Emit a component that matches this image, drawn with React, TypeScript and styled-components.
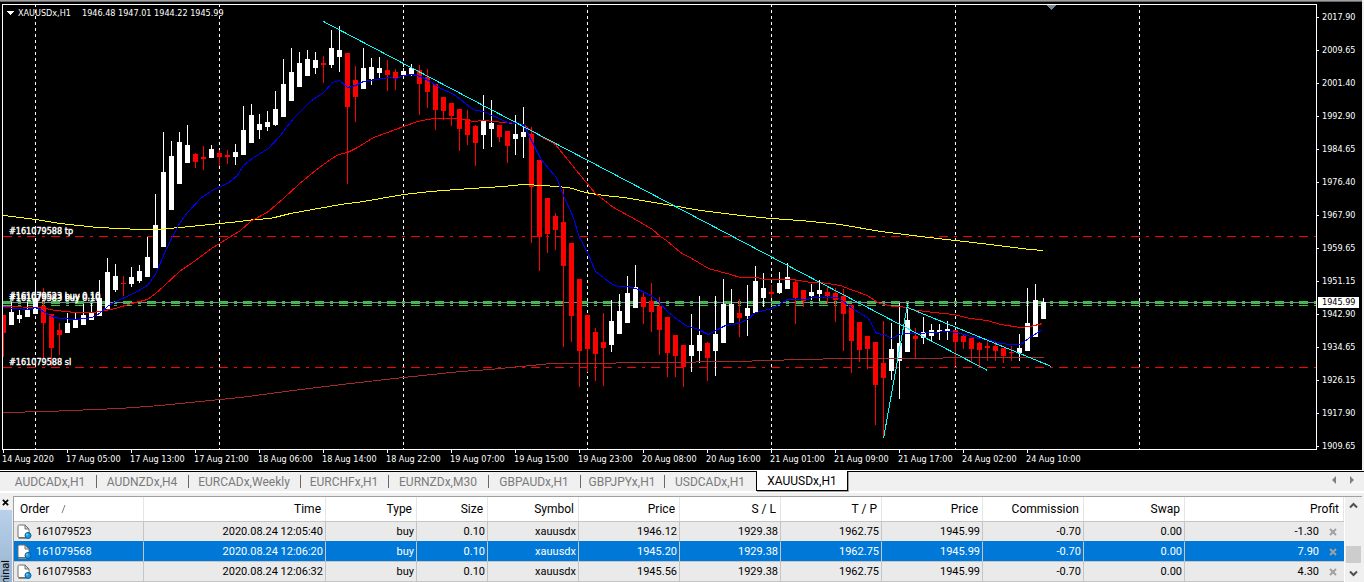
import React, { useState } from "react";
import styled, { createGlobalStyle, css } from "styled-components";

const GlobalStyle = createGlobalStyle`
  * { box-sizing: border-box; }
  html, body { margin: 0; padding: 0; }
  body {
    background: #f0f0f0;
    color: #000;
    font-family: Roboto, "Open Sans", sans-serif;
    font-size: 12px;
  }
  button { font: inherit; color: inherit; background: none; border: 0; padding: 0; margin: 0; }
`;

const CHART_FONT = `"DejaVu Sans Condensed", "DejaVu Sans", sans-serif`;

/* ---------- data ---------- */

type Candle = [up: 0 | 1, high: number, top: number, bottom: number, low: number];

const FIRST_BAR = 3;
const BAR_STEP = 8;

const candles: Candle[] = [
  [0, 315, 315, 333, 357], [1, 302, 312, 325, 325], [1, 310, 315, 319, 323], [1, 302, 310, 317, 317],
  [1, 280, 298, 314, 314], [0, 288, 306, 323, 358], [0, 314, 314, 348, 366], [0, 323, 330, 335, 355],
  [1, 313, 323, 333, 333], [1, 313, 320, 328, 328], [1, 304, 315, 325, 325], [1, 303, 313, 320, 320],
  [1, 280, 298, 316, 316], [1, 258, 272, 309, 309], [1, 264, 276, 290, 292], [0, 276, 283, 284, 296],
  [1, 267, 277, 284, 287], [1, 265, 271, 281, 283], [1, 237, 257, 277, 277], [1, 194, 225, 268, 268],
  [1, 132, 172, 247, 247], [1, 141, 156, 210, 210], [1, 132, 142, 184, 184], [1, 125, 145, 163, 163],
  [0, 153, 154, 162, 168], [0, 146, 157, 159, 170], [1, 145, 149, 158, 158], [0, 150, 153, 157, 166],
  [0, 150, 155, 157, 164], [1, 144, 152, 157, 165], [1, 106, 130, 155, 155], [1, 104, 115, 143, 143],
  [1, 114, 124, 130, 139], [1, 111, 122, 127, 131], [1, 91, 109, 125, 126], [1, 59, 84, 117, 117],
  [1, 48, 72, 101, 101], [1, 52, 63, 87, 87], [1, 50, 59, 76, 76], [1, 52, 60, 68, 74],
  [0, 56, 63, 65, 83], [1, 30, 48, 65, 68], [1, 26, 50, 57, 72], [0, 53, 53, 107, 184],
  [0, 66, 80, 97, 122], [1, 48, 68, 89, 89], [1, 58, 67, 79, 85], [1, 57, 68, 73, 78],
  [0, 60, 70, 75, 91], [0, 69, 72, 78, 90], [1, 68, 71, 75, 75], [1, 64, 68, 74, 76],
  [0, 65, 70, 84, 115], [0, 69, 77, 92, 108], [0, 84, 84, 110, 130], [0, 97, 97, 111, 120],
  [0, 103, 103, 116, 126], [0, 109, 109, 129, 151], [0, 110, 119, 135, 145], [0, 125, 126, 143, 166],
  [1, 95, 120, 135, 149], [1, 100, 123, 129, 147], [0, 125, 125, 137, 142], [0, 131, 131, 146, 163],
  [1, 115, 134, 139, 155], [1, 107, 132, 137, 158], [0, 127, 134, 187, 243], [0, 160, 160, 237, 271],
  [0, 198, 198, 234, 253], [0, 213, 216, 230, 250], [0, 189, 222, 266, 347], [0, 243, 243, 316, 342],
  [0, 279, 279, 351, 387], [0, 315, 315, 349, 372], [0, 328, 332, 354, 381], [0, 313, 342, 348, 386],
  [1, 300, 321, 345, 352], [1, 294, 311, 334, 334], [1, 276, 293, 323, 323], [1, 265, 287, 308, 308],
  [0, 293, 297, 307, 324], [0, 283, 301, 312, 332], [0, 297, 306, 330, 355], [0, 317, 317, 353, 377],
  [0, 335, 335, 356, 377], [0, 345, 345, 367, 387], [1, 314, 345, 356, 372], [1, 296, 335, 351, 363],
  [0, 342, 343, 358, 381], [1, 296, 334, 351, 376], [1, 279, 304, 343, 343], [1, 289, 304, 323, 323],
  [0, 299, 313, 318, 337], [1, 285, 308, 316, 336], [1, 266, 281, 313, 313], [1, 273, 288, 298, 307],
  [0, 285, 292, 294, 298], [1, 272, 283, 293, 294], [1, 263, 277, 289, 289], [0, 279, 282, 298, 324],
  [0, 290, 290, 301, 307], [1, 284, 292, 296, 300], [1, 280, 290, 294, 301], [0, 287, 292, 296, 304],
  [0, 288, 293, 300, 322], [0, 289, 296, 314, 351], [0, 305, 305, 341, 373], [0, 322, 322, 350, 362],
  [0, 336, 336, 349, 369], [0, 342, 342, 385, 425], [0, 321, 363, 378, 437], [1, 323, 349, 371, 380],
  [1, 303, 343, 361, 399], [1, 303, 320, 352, 352], [0, 328, 336, 339, 358], [1, 317, 332, 338, 344],
  [1, 324, 330, 336, 341], [1, 324, 330, 332, 340], [1, 321, 329, 331, 340], [0, 330, 330, 342, 366],
  [0, 334, 336, 342, 349], [0, 338, 338, 349, 362], [0, 342, 343, 350, 366], [0, 340, 346, 348, 361],
  [0, 342, 346, 351, 361], [0, 348, 348, 356, 363], [0, 346, 352, 353, 361], [1, 334, 348, 353, 361],
  [1, 288, 323, 351, 351], [1, 284, 300, 337, 337], [1, 298, 302, 319, 319],
];

const averages = [
  {
    color: "#a52a2a",
    points:
      "3,412 47,411 95,409 119,408 160,405 200,401 240,397 300,389 350,383 403,377 460,371 490,369 520,366 551,363 615,363 616,362 695,362 696,361 751,361 752,360 783,360 784,359 822,359 823,358 942,358 943,357 1043,357",
  },
  {
    color: "#ffff00",
    points:
      "3,215 35,219 60,223 97,227 119,228 140,229 158,229 179,227 200,225 220,223 230,222 255,219 270,218 290,213 340,204 363,201 403,194 430,191 470,188 487,187 503,186 523,184 543,185 568,187 585,192 603,195 623,197 647,201 660,203 700,210 740,215 771,218 800,220 840,224 880,231 920,236 955,240 990,244 1029,249 1043,250",
  },
  {
    color: "#ff0000",
    points:
      "3,306 40,307 55,310 75,312 92,312 99,311 115,308 131,303 147,299 155,293 163,286 179,271 195,260 211,248 227,238 240,230 250,221 268,211 283,198 298,184 315,170 330,159 338,154 347,152 357,147 373,137 387,132 403,126 417,121 433,118 457,118 473,121 483,120 503,122 523,124 532,131 542,137 555,144 563,154 580,175 595,193 613,207 635,219 652,229 660,236 666,240 680,252 693,259 708,268 730,274 740,277 757,277 763,279 793,279 810,282 820,282 840,285 850,289 867,295 877,302 892,306 900,306 917,310 933,312 953,314 970,318 987,320 1000,324 1020,327 1030,326 1042,323",
  },
  {
    color: "#0000ff",
    points:
      "3,307 15,308 27,309 35,307 43,311 51,316 59,318 75,319 92,317 99,313 107,306 115,301 131,294 147,285 155,274 163,255 171,238 179,223 187,212 200,198 213,189 227,183 237,175 243,165 253,157 268,148 280,135 293,118 310,101 323,92 332,82 339,80 347,87 355,85 363,81 377,79 388,77 396,78 403,75 412,74 420,76 430,81 440,88 452,93 460,99 470,107 475,110 483,111 492,115 507,122 523,124 532,142 540,158 548,168 556,177 563,195 572,215 579,237 587,252 595,271 612,284 618,286 628,286 638,289 652,296 660,303 668,312 677,319 685,325 692,327 698,329 708,334 717,329 725,325 738,323 747,319 755,312 772,308 780,303 787,299 807,299 812,297 837,297 843,301 852,308 868,318 876,333 883,334 892,338 900,333 917,333 933,332 947,331 957,332 973,337 987,339 1000,343 1010,344 1020,344 1028,338 1042,329",
  },
];

const trendLines = ["323,21 987,370", "883,438 907,304", "907,307 1051,366"];
const daySeparators = [35, 219, 403, 587, 771, 955, 1139];
const orderLevels = [
  { y: 236, color: "#ff0000" },
  { y: 301, color: "#32cd32" },
  { y: 303, color: "#32cd32" },
  { y: 305, color: "#32cd32" },
  { y: 367, color: "#ff0000" },
];
const orderLabels = [
  { y: 234, text: "#161079588 tp" },
  { y: 299, text: "#161079523 buy 0.10" },
  { y: 301, text: "#161079583 buy 0.10" },
  { y: 365, text: "#161079588 sl" },
];

const prices = [
  "2017.90", "2009.65", "2001.40", "1992.90", "1984.65", "1976.40", "1967.90",
  "1959.65", "1951.15", "1942.90", "1934.65", "1926.15", "1917.90", "1909.65",
];

const times = [
  "14 Aug 2020", "17 Aug 05:00", "17 Aug 13:00", "17 Aug 21:00", "18 Aug 06:00", "18 Aug 14:00",
  "18 Aug 22:00", "19 Aug 07:00", "19 Aug 15:00", "19 Aug 23:00", "20 Aug 08:00", "20 Aug 16:00",
  "21 Aug 01:00", "21 Aug 09:00", "21 Aug 17:00", "24 Aug 02:00", "24 Aug 10:00",
];

const tabs = [
  { label: "AUDCADx,H1", width: 92 },
  { label: "AUDNZDx,H4", width: 92 },
  { label: "EURCADx,Weekly", width: 112 },
  { label: "EURCHFx,H1", width: 88 },
  { label: "EURNZDx,M30", width: 100 },
  { label: "GBPAUDx,H1", width: 92 },
  { label: "GBPJPYx,H1", width: 84 },
  { label: "USDCADx,H1", width: 92 },
  { label: "XAUUSDx,H1", width: 92 },
];

const columns = [
  { title: "Time", width: 182 },
  { title: "Type", width: 91 },
  { title: "Size", width: 71 },
  { title: "Symbol", width: 91 },
  { title: "Price", width: 101 },
  { title: "S / L", width: 101 },
  { title: "T / P", width: 101 },
  { title: "Price", width: 101 },
  { title: "Commission", width: 101 },
  { title: "Swap", width: 101 },
];

const orders = [
  { id: "161079523", cells: ["2020.08.24 12:05:40", "buy", "0.10", "xauusdx", "1946.12", "1929.38", "1962.75", "1945.99", "-0.70", "0.00"], profit: "-1.30" },
  { id: "161079568", cells: ["2020.08.24 12:06:20", "buy", "0.10", "xauusdx", "1945.20", "1929.38", "1962.75", "1945.99", "-0.70", "0.00"], profit: "7.90" },
  { id: "161079583", cells: ["2020.08.24 12:06:32", "buy", "0.10", "xauusdx", "1945.56", "1929.38", "1962.75", "1945.99", "-0.70", "0.00"], profit: "4.30" },
];

/* ---------- layout ---------- */

const Shell = styled.div`
  display: flex;
  flex-direction: column;
  height: 100vh;
  overflow: hidden;
`;

const ChartWindow = styled.section`
  flex: none;
  display: flex;
  margin-right: 2px;
  padding-left: 2px;
  border-top: 1px solid #a0a0a0;
  background: #000;
  box-shadow: inset 0 1px 0 #696969;
  color: #fff;
  font-family: ${CHART_FONT};
  font-size: 9px;
  line-height: 11px;
`;

const PlotColumn = styled.div`
  flex: 1;
  min-width: 0;
  padding-top: 3px;
`;

const Plot = styled.div`
  border: 1px solid #fff;
  overflow: hidden;
`;

const PlotSvg = styled.svg`
  display: block;
  width: 100%;
  height: 444px;
  font-family: ${CHART_FONT};
  font-size: 9px;
`;

const TimeAxis = styled.div`
  display: flex;
  height: 20px;
  overflow: hidden;
`;

const TimeLabel = styled.span`
  flex: 0 0 64px;
  white-space: nowrap;
  &::before {
    content: "";
    display: block;
    width: 1px;
    height: 3px;
    margin: 0 0 1px 1px;
    background: #fff;
  }
`;

const PriceAxis = styled.div`
  position: relative;
  flex: none;
  width: 45px;
  padding-top: 11px;
  display: flex;
  flex-direction: column;
  gap: 22px;
`;

const PriceLabel = styled.span`
  display: flex;
  align-items: center;
  gap: 3px;
  height: 11px;
  &::before {
    content: "";
    width: 2px;
    height: 1px;
    background: #fff;
  }
`;

const CurrentPrice = styled.span`
  position: absolute;
  left: 1px;
  top: 296px;
  width: 41px;
  padding-left: 4px;
  background: #fff;
  color: #000;
`;

const TabBar = styled.nav`
  flex: none;
  display: flex;
  align-items: flex-start;
  height: 22px;
  margin-top: 1px;
  padding-left: 4px;
  border-top: 1px solid #000;
  box-shadow: 0 -1px 0 #fff, inset 0 -2px 0 #fff;
`;

const Tab = styled.button<{ $width: number; $active: boolean; $last: boolean }>`
  position: relative;
  flex: 0 0 ${(p) => p.$width}px;
  height: 19px;
  line-height: 18px;
  color: #7a7a7a;
  white-space: nowrap;
  ${(p) =>
    p.$active
      ? css`
          margin-top: -1px;
          height: 20px;
          line-height: 20px;
          background: #fff;
          color: #000;
          border: solid #000;
          border-width: 0 1px 1px;
          box-shadow: 1px 1px 0 #a0a0a0;
          z-index: 1;
        `
      : !p.$last &&
        css`
          &::after {
            content: "";
            position: absolute;
            right: -1px;
            top: 3px;
            width: 1px;
            height: 13px;
            background: #696969;
          }
        `}
`;

const TabScroll = styled.div`
  display: flex;
  gap: 6px;
  margin-left: auto;
  padding: 2px 6px 0 0;
`;

const ArrowButton = styled.button`
  display: flex;
  align-items: center;
  justify-content: center;
  width: 12px;
  height: 12px;
  svg { display: block; }
`;

const Terminal = styled.section`
  flex: 1;
  min-height: 0;
  display: flex;
  padding: 3px 2px 0 0;
`;

const SideStrip = styled.aside`
  flex: none;
  width: 13px;
  display: flex;
  flex-direction: column;
  overflow: hidden;
`;

const CloseButton = styled.button`
  flex: none;
  width: 10px;
  height: 12px;
  display: flex;
  align-items: center;
  justify-content: center;
  margin-bottom: 2px;
`;

const SideTitle = styled.div`
  flex: 1;
  min-height: 0;
  width: 12px;
  padding-top: 50px;
  background: linear-gradient(#b9d1ea, #99b4d1);
  overflow: hidden;
  span {
    display: block;
    writing-mode: vertical-rl;
    transform: rotate(180deg);
    line-height: 12px;
    font-size: 11px;
  }
`;

const GridFrame = styled.div`
  flex: 1;
  min-width: 0;
  display: flex;
  border: solid #a0a0a0;
  border-width: 1px 0 0 1px;
  background: #fff;
  overflow: hidden;
`;

const TableBox = styled.div`
  flex: 1;
  min-width: 0;
  overflow: hidden;
`;

const OrdersTable = styled.table`
  width: 100%;
  table-layout: fixed;
  border-collapse: separate;
  border-spacing: 0;
  border-bottom: 1px solid #c5c5c5;
`;

const HeadCell = styled.th`
  height: 24px;
  padding: 0 4px 0 6px;
  border-right: 1px solid #e5e5e5;
  font-weight: 400;
  text-align: right;
  line-height: 16px;
  white-space: nowrap;
`;

const OrderHead = styled(HeadCell)`
  text-align: left;
  svg { margin-left: 12px; }
`;

const Row = styled.tr<{ $selected: boolean }>`
  background: ${(p) => (p.$selected ? "#0078d7" : "#eaeaea")};
  color: ${(p) => (p.$selected ? "#fff" : "#000")};
  td { border-top-color: ${(p) => (p.$selected ? "#0078d7" : "#c5c5c5")}; }
`;

const Cell = styled.td`
  height: 20px;
  padding: 0 2px 0 3px;
  border-top: 1px solid;
  border-right: 1px solid #c5c5c5;
  font-size: 11px;
  line-height: 16px;
  text-align: right;
  white-space: nowrap;
`;

const OrderId = styled.span`
  display: flex;
  align-items: center;
  gap: 4px;
`;

const ProfitCell = styled(Cell)`
  border-right: 0;
  padding-right: 7px;
`;

const Profit = styled.span`
  display: flex;
  align-items: center;
  justify-content: flex-end;
  gap: 10px;
`;

const RowClose = styled.button`
  display: flex;
`;

const ScrollBar = styled.div`
  flex: none;
  width: 18px;
  display: flex;
  flex-direction: column;
  align-items: center;
  background: #f0f0f0;
  border-left: 1px solid #fff;
`;

const ScrollButton = styled.button`
  flex: none;
  width: 16px;
  height: 17px;
  display: flex;
  align-items: center;
  justify-content: center;
`;

const ScrollTrack = styled.div`
  flex: 1;
  display: flex;
  flex-direction: column;
  justify-content: flex-end;
  padding-bottom: 2px;
`;

const ScrollThumb = styled.div`
  width: 15px;
  height: 17px;
  background: #cdcdcd;
`;

/* ---------- drawings ---------- */

const ChartDrawing = () => (
  <PlotSvg role="img" aria-label="XAUUSDx H1 candlestick chart" shapeRendering="crispEdges">
    <g transform="translate(-3 -5)">
      <g transform="translate(0.5 0.5)" fill="none">
        {daySeparators.map((x) => (
          <line key={x} x1={x} x2={x} y1={3.5} y2={449} stroke="#fff" strokeDasharray="3 3" />
        ))}
        {orderLevels.map((l) => (
          <line key={l.y} x1={2.5} x2="110%" y1={l.y} y2={l.y} stroke={l.color} strokeDasharray="9 6 3 6" />
        ))}
        <line x1={2.5} x2="110%" y1={302} y2={302} stroke="#778899" />
      </g>
      {candles.map(([up, high, top, bottom, low], i) => {
        const x = FIRST_BAR + i * BAR_STEP;
        return (
          <g key={x} fill={up ? "#fff" : "#f00"}>
            <rect x={x} y={high} width={1} height={low - high} />
            <rect x={x - 2} y={top} width={5} height={bottom - top} />
          </g>
        );
      })}
      <g transform="translate(0.5 0.5)" fill="none">
        {averages.map((a) => (
          <polyline key={a.color} points={a.points} stroke={a.color} />
        ))}
        {trendLines.map((p) => (
          <polyline key={p} points={p} stroke="#0ff" />
        ))}
      </g>
      <path d="M1047 5h9l-4 5h-1z" fill="#778899" />
      <path d="M6 11h8l-4 4z" fill="#fff" />
      <g fill="#fff">
        <text x={18} y={16}>XAUUSDx,H1</text>
        <text x={82} y={16}>1946.48 1947.01 1944.22 1945.99</text>
      </g>
      <g fill="#fff" stroke="#fff" strokeWidth={0.4}>
        {orderLabels.map((l) => (
          <text key={l.y} x={9} y={l.y}>{l.text}</text>
        ))}
      </g>
    </g>
  </PlotSvg>
);

const OrderIcon = () => (
  <svg width="15" height="16" viewBox="0 0 15 16" aria-hidden="true">
    <path d="M1 13V2.500Q1 1 2.500 1H8l4 4v8.500H2z" fill="#fff" stroke="#707070" />
    <path d="M8 1v4h4z" fill="#d8d8d8" stroke="#707070" />
    <path d="M1.500 14.500h8" stroke="#8a8a8a" />
    <circle cx="11" cy="11.500" r="3" fill="#1e9be0" stroke="#0a5e96" />
    <circle cx="10" cy="10.500" r="1" fill="#7accf5" />
  </svg>
);

const Cross = ({ color, size }: { color: string; size: number }) => (
  <svg width={size} height={size} viewBox="0 0 8 8" aria-hidden="true">
    <path d="M1 1l6 6M7 1L1 7" stroke={color} strokeWidth="2" />
  </svg>
);

const Chevron = ({ down = false }: { down?: boolean }) => (
  <svg width="9" height="7" viewBox="0 0 9 7" aria-hidden="true">
    <path d={down ? "M1 1.500l3.500 3.500L8 1.500" : "M1 5.500L4.500 2 8 5.500"} fill="none" stroke="#505050" strokeWidth="2" />
  </svg>
);

/* ---------- page ---------- */

export default function App() {
  const [activeTab, setActiveTab] = useState("XAUUSDx,H1");
  const [selected, setSelected] = useState("161079568");

  return (
    <Shell>
      <GlobalStyle />
      <ChartWindow>
        <PlotColumn>
          <Plot>
            <ChartDrawing />
          </Plot>
          <TimeAxis>
            {times.map((t) => (
              <TimeLabel key={t}>{t}</TimeLabel>
            ))}
          </TimeAxis>
        </PlotColumn>
        <PriceAxis>
          {prices.map((p) => (
            <PriceLabel key={p}>{p}</PriceLabel>
          ))}
          <CurrentPrice>1945.99</CurrentPrice>
        </PriceAxis>
      </ChartWindow>

      <TabBar aria-label="Charts">
        {tabs.map((t, i) => (
          <Tab
            key={t.label}
            $width={t.width}
            $active={t.label === activeTab}
            $last={i === tabs.length - 1 || tabs[i + 1].label === activeTab}
            onClick={() => setActiveTab(t.label)}
          >
            {t.label}
          </Tab>
        ))}
        <TabScroll>
          <ArrowButton aria-label="Scroll tabs left">
            <svg width="4" height="8" viewBox="0 0 4 8"><path d="M4 0v8L0 4z" fill="#808080" /></svg>
          </ArrowButton>
          <ArrowButton aria-label="Scroll tabs right">
            <svg width="4" height="8" viewBox="0 0 4 8"><path d="M0 0v8l4-4z" fill="#808080" /></svg>
          </ArrowButton>
        </TabScroll>
      </TabBar>

      <Terminal>
        <SideStrip>
          <CloseButton aria-label="Close terminal">
            <Cross color="#000" size={7} />
          </CloseButton>
          <SideTitle>
            <span>Terminal</span>
          </SideTitle>
        </SideStrip>
        <GridFrame>
          <TableBox>
            <OrdersTable>
              <colgroup>
                <col width={130} />
                {columns.map((c, i) => (
                  <col key={i} width={c.width} />
                ))}
                <col />
              </colgroup>
              <thead>
                <tr>
                  <OrderHead scope="col">
                    Order
                    <svg width="5" height="8" viewBox="0 0 5 8" aria-hidden="true">
                      <path d="M1 8L4 0" stroke="#808080" />
                    </svg>
                  </OrderHead>
                  {columns.map((c, i) => (
                    <HeadCell key={i} scope="col">{c.title}</HeadCell>
                  ))}
                  <HeadCell scope="col">Profit</HeadCell>
                </tr>
              </thead>
              <tbody>
                {orders.map((o) => (
                  <Row key={o.id} $selected={o.id === selected} onClick={() => setSelected(o.id)}>
                    <Cell>
                      <OrderId>
                        <OrderIcon />
                        {o.id}
                      </OrderId>
                    </Cell>
                    {o.cells.map((c, i) => (
                      <Cell key={i}>{c}</Cell>
                    ))}
                    <ProfitCell>
                      <Profit>
                        {o.profit}
                        <RowClose aria-label={`Close order ${o.id}`}>
                          <Cross color="#a0a0a0" size={8} />
                        </RowClose>
                      </Profit>
                    </ProfitCell>
                  </Row>
                ))}
              </tbody>
            </OrdersTable>
          </TableBox>
          <ScrollBar>
            <ScrollButton aria-label="Scroll up">
              <Chevron />
            </ScrollButton>
            <ScrollTrack>
              <ScrollThumb />
            </ScrollTrack>
            <ScrollButton aria-label="Scroll down">
              <Chevron down />
            </ScrollButton>
          </ScrollBar>
        </GridFrame>
      </Terminal>
    </Shell>
  );
}
